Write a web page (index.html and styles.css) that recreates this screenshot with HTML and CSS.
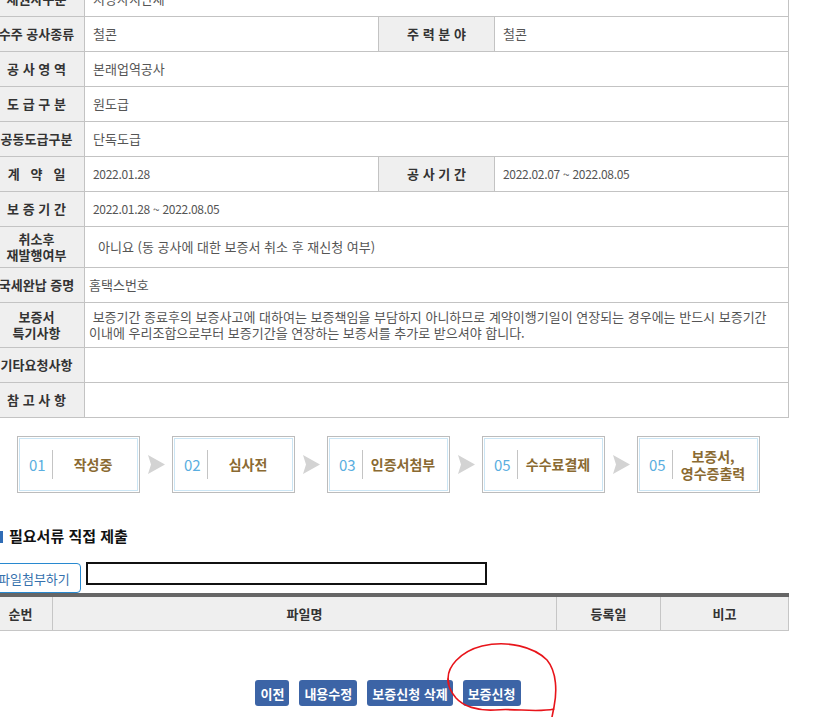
FILE: index.html
```html
<!DOCTYPE html>
<html lang="ko">
<head>
    <meta charset="UTF-8">
    <meta name="viewport" content="width=device-width, initial-scale=1.0">
    <title>보증신청</title>
    <link rel="stylesheet" href="styles.css">
</head>
<body>
    <div class="wrap">
        <table class="info">
            <colgroup>
                <col style="width:96px">
                <col style="width:294px">
                <col style="width:116px">
                <col style="width:294px">
            </colgroup>
            <tr>
                <th>채권자구분</th>
                <td colspan="3">지방자치단체</td>
            </tr>
            <tr>
                <th>수주 공사종류</th>
                <td>철콘</td>
                <th>주 력 분 야</th>
                <td>철콘</td>
            </tr>
            <tr>
                <th>공 사 영 역</th>
                <td colspan="3">본래업역공사</td>
            </tr>
            <tr>
                <th>도 급 구 분</th>
                <td colspan="3">원도급</td>
            </tr>
            <tr>
                <th>공동도급구분</th>
                <td colspan="3">단독도급</td>
            </tr>
            <tr>
                <th>계&nbsp;&nbsp;&nbsp;약&nbsp;&nbsp;&nbsp;일</th>
                <td class="num">2022.01.28</td>
                <th>공 사 기 간</th>
                <td class="num">2022.02.07 ~ 2022.08.05</td>
            </tr>
            <tr>
                <th>보 증 기 간</th>
                <td colspan="3" class="num">2022.01.28 ~ 2022.08.05</td>
            </tr>
            <tr class="tall">
                <th>취소후<br>재발행여부</th>
                <td colspan="3" class="indent">아니요 (동 공사에 대한 보증서 취소 후 재신청 여부)</td>
            </tr>
            <tr>
                <th>국세완납 증명</th>
                <td colspan="3" class="tight">홈택스번호</td>
            </tr>
            <tr class="taller">
                <th>보증서<br>특기사항</th>
                <td colspan="3" class="tight">&nbsp;보증기간 종료후의 보증사고에 대하여는 보증책임을 부담하지 아니하므로 계약이행기일이 연장되는 경우에는 반드시 보증기간<br>이내에 우리조합으로부터 보증기간을 연장하는 보증서를 추가로 받으셔야 합니다.</td>
            </tr>
            <tr>
                <th>기타요청사항</th>
                <td colspan="3"></td>
            </tr>
            <tr>
                <th>참 고 사 항</th>
                <td colspan="3"></td>
            </tr>
        </table>

        <div class="steps">
            <div class="step"><div class="step-in"><span class="no">01</span><span class="label">작성중</span></div></div>
            <svg class="arrow" width="17" height="19" viewBox="0 0 17 19"><polygon points="0,0 17,9.5 0,19 3,9.5" fill="#d3d3d3"/></svg>
            <div class="step"><div class="step-in"><span class="no">02</span><span class="label">심사전</span></div></div>
            <svg class="arrow" width="17" height="19" viewBox="0 0 17 19"><polygon points="0,0 17,9.5 0,19 3,9.5" fill="#d3d3d3"/></svg>
            <div class="step"><div class="step-in"><span class="no">03</span><span class="label">인증서첨부</span></div></div>
            <svg class="arrow" width="17" height="19" viewBox="0 0 17 19"><polygon points="0,0 17,9.5 0,19 3,9.5" fill="#d3d3d3"/></svg>
            <div class="step"><div class="step-in"><span class="no">05</span><span class="label">수수료결제</span></div></div>
            <svg class="arrow" width="17" height="19" viewBox="0 0 17 19"><polygon points="0,0 17,9.5 0,19 3,9.5" fill="#d3d3d3"/></svg>
            <div class="step"><div class="step-in"><span class="no">05</span><span class="label">보증서,<br>영수증출력</span></div></div>
        </div>

        <h3 class="sub-title">필요서류 직접 제출</h3>

        <div class="upload">
            <button class="file-btn">파일첨부하기</button>
            <input type="text" class="file-name">
        </div>

        <table class="files">
            <colgroup>
                <col style="width:64px">
                <col style="width:504px">
                <col style="width:104px">
                <col style="width:128px">
            </colgroup>
            <tr>
                <th>순번</th>
                <th>파일명</th>
                <th>등록일</th>
                <th>비고</th>
            </tr>
        </table>

        <div class="actions">
            <button>이전</button>
            <button>내용수정</button>
            <button>보증신청 삭제</button>
            <button>보증신청</button>
        </div>
    </div>

    <svg class="mark" width="822" height="717" viewBox="0 0 822 717">
        <path d="M449,684 C444,667 462,651 482,646 C508,640 534,647 547,660 C557,672 557,692 554,707 L552,717 M554,709 C536,713 515,708 495,710 C477,711 463,706 456,698 C451,692 447,686 448,678" fill="none" stroke="#e8141a" stroke-width="1.6" stroke-linecap="round"/>
    </svg>
</body>
</html>
```

FILE: styles.css
```css
body {
    margin: 0;
    font-family: "Noto Sans CJK KR", "Malgun Gothic", sans-serif;
    font-size: 13px;
    color: #555;
    background: #fff;
    overflow: hidden;
}
.wrap {
    width: 800px;
    margin: -19px 0 0 -12px;
}
.info {
    width: 800px;
    border-collapse: collapse;
    table-layout: fixed;
    border-right: 1px solid #c3c3c3;
}
.info th,
.info td {
    height: 34px;
    padding: 0;
    border: 1px solid #c3c3c3;
    line-height: 16px;
}
.info th {
    background: #efefef;
    color: #333;
    font-weight: bold;
    text-align: center;
    font-size: 13px;
}
.info td {
    padding-left: 8px;
    text-align: left;
}
.info td.num {
    font-size: 12px;
    letter-spacing: -0.3px;
}
.info td.indent {
    padding-left: 13px;
}
.info td.tight {
    padding-left: 4px;
}
.info tr.tall th,
.info tr.tall td {
    height: 40px;
}
.info tr.taller th,
.info tr.taller td {
    height: 44px;
}
.steps {
    display: flex;
    align-items: center;
    margin: 18px 0 0 29px;
}
.step {
    width: 123px;
    height: 57px;
    border: 1px solid #bcbcbc;
    padding: 1px;
    box-sizing: border-box;
}
.step-in {
    height: 100%;
    border: 1px solid #cbe5f4;
    box-sizing: border-box;
    display: flex;
    align-items: center;
}
.step .no {
    width: 23px;
    padding-left: 9px;
    height: 29px;
    line-height: 29px;
    border-right: 1px solid #c4c4c4;
    color: #5aaee0;
    font-size: 15px;
}
.step .label {
    flex: 1;
    text-align: center;
    color: #8a6a32;
    font-size: 14px;
    font-weight: bold;
    line-height: 17px;
    padding-right: 4px;
}
.arrow {
    margin: 0 7px 0 8px;
}
.sub-title {
    margin: 33px 0 0 11px;
    font-size: 15px;
    line-height: 20px;
    color: #111;
}
.sub-title::before {
    content: "";
    display: inline-block;
    width: 4px;
    height: 12px;
    background: #2f6cb5;
    margin-right: 6px;
    vertical-align: -1px;
}
.upload {
    display: flex;
    align-items: flex-start;
    gap: 5px;
    margin-top: 16px;
}
.file-btn {
    height: 30px;
    padding: 0 10px 0 9px;
    border: 1px solid #2889d0;
    border-radius: 4px;
    background: #fff;
    color: #3571ad;
    font-family: inherit;
    font-size: 13px;
    margin-top: 1px;
}
.file-name {
    width: 397px;
    height: 19px;
    padding: 0;
    border: 2px solid #111;
    font-family: inherit;
}
.files {
    width: 800px;
    border-collapse: collapse;
    table-layout: fixed;
    border-top: 4px solid #666;
}
.files th {
    height: 33px;
    padding: 0;
    border: 1px solid #c6c6c6;
    border-top: none;
    background: #efefef;
    color: #333;
    font-size: 13px;
    font-weight: bold;
}
.actions {
    display: flex;
    justify-content: center;
    gap: 10px;
    margin-top: 49px;
}
.actions button {
    height: 26px;
    padding: 0 5px;
    border: none;
    border-radius: 3px;
    background: #3c64a6;
    color: #fff;
    font-family: inherit;
    font-size: 13px;
    font-weight: bold;
}
.mark {
    position: absolute;
    left: 0;
    top: 0;
    pointer-events: none;
}
```
